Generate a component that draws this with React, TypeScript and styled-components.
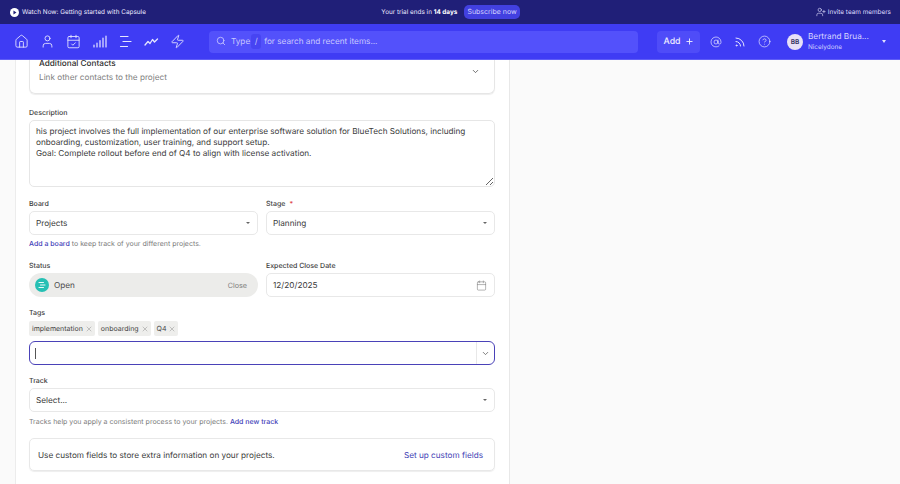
import React from "react";
import styled, { createGlobalStyle } from "styled-components";
import { Home, User, CalendarCheck, Zap, Search, Plus, AtSign, Rss, CircleHelp, UserPlus, ChevronDown, X, Calendar } from "lucide-react";

const Global = createGlobalStyle`
  html, body { margin: 0; height: 100%; background: #fafafa; }
  body { font-family: Inter, "Liberation Sans", sans-serif; color: #2b2b2b; overflow: hidden; text-rendering: geometricPrecision; }
  * { box-sizing: border-box; }
`;

const Page = styled.div`display: flex; flex-direction: column; height: 484px; width: 900px; overflow: hidden;`;

const TopBar = styled.div`
  height: 24px; background: #201f78; color: #fff; font-size: 6.4px; display: grid;
  grid-template-columns: 1fr auto 1fr; align-items: center; padding: 0 9px 0 10px; flex: none;
`;
const Watch = styled.div`display: flex; align-items: center; gap: 3px; color: #eceaff;`;
const PlayDisc = styled.svg`width: 9px; height: 9px; flex: none;`;
const Trial = styled.div`display: flex; align-items: center; gap: 7px; color: #eceaff; b { font-weight: 700; color: #fff; }`;
const Subscribe = styled.span`background: #4240e0; color: #d5d4ff; border-radius: 5px; padding: 2px 3px; line-height: 10px; font-size: 7px;`;
const Invite = styled.div`display: flex; align-items: center; gap: 2px; justify-content: flex-end; color: #dfdeff;`;

const Nav = styled.div`
  height: 36px; background: #3f3cf4; border-bottom: 1px solid #5f5df6; color: #e6e6ff; display: flex; align-items: center; flex: none; padding-left: 13px;
  position: relative; z-index: 1;
`;
const IconRow = styled.div`display: flex; gap: 10px; align-items: center; width: 196px; flex: none;`;
const NavIcon = styled.span`width: 16px; height: 16px; display: flex; align-items: center; justify-content: center; flex: none;`;
const SearchBox = styled.div`
  width: 429px; height: 22px; background: #5351fb; border-radius: 4px; display: flex; align-items: center; padding: 0 0 1px 7px; color: #c9c8ff; font-size: 8.2px; flex: none;
`;
const SearchGlyph = styled(Search)`margin-right: 5px;`;
const Key = styled.span`background: #4744f2; border-radius: 3px; width: 10px; height: 15px; display: flex; align-items: center; justify-content: center; margin: 0 3px 0 1px;`;
const AddBtn = styled.div`
  margin-left: 19px; width: 43px; height: 22px; background: #4f4cf8; border-radius: 4px; display: flex; align-items: center; justify-content: center; gap: 4px; color: #eeeeff; font-size: 8.8px; font-weight: 500; flex: none;
`;
const RightIcons = styled.div`display: flex; margin-left: 8px; gap: 8px; align-items: center;`;
const Avatar = styled.div`
  margin-left: 15px; width: 16px; height: 16px; border-radius: 50%; background: #e7e0f7; color: #33305f; font-size: 6.5px; font-weight: 600; display: flex; align-items: center; justify-content: center; flex: none;
`;
const UserInfo = styled.div`margin-left: 5px; width: 69px; display: flex; flex-direction: column; flex: none;`;
const UserName = styled.div`font-size: 8.2px; line-height: 11px; color: #d9d8ff; white-space: nowrap;`;
const Org = styled.div`font-size: 6.4px; line-height: 10px; color: #d0cfff;`;
const Caret = styled.span`margin-left: 5px; width: 0; height: 0; border-left: 2.5px solid transparent; border-right: 2.5px solid transparent; border-top: 3px solid #e0e0ff;`;

const Main = styled.div`flex: 1; overflow: hidden; padding-left: 15px;`;
const FormCard = styled.div`
  width: 495px; background: #fff; border-left: 1px solid #ececec; border-right: 1px solid #e8e8e8; padding: 0 14px 0 13px; height: 500px;
`;
const Contacts = styled.div`
  height: 34px; border: 1px solid #e6e6e6; border-top: none; border-radius: 0 0 6px 6px; box-shadow: 0 1px 1px #eee; display: flex; align-items: flex-start; justify-content: space-between; padding: 0 14px 0 9px; margin-bottom: 13px;
`;
const ContactsText = styled.div`display: flex; flex-direction: column; gap: 4px;`;
const ContactsTitle = styled.div`font-size: 8.2px; font-weight: 500; color: #2d2d2d; line-height: 7px;`;
const ContactsSub = styled.div`font-size: 8.2px; color: #808080; line-height: 12px;`;
const ContactsChevron = styled.span`display: flex; margin-top: 7px; color: #444;`;

const Label = styled.div`font-size: 7px; font-weight: 500; color: #3c3c3c; height: 13px; line-height: 11px; span { color: #d44; margin-left: 4px; }`;
const TagsLabel = styled(Label)`height: 14px; margin-top: 10px;`;
const Desc = styled.textarea`
  display: block; width: 466px; height: 67px; border: 1px solid #e6e6e6; border-radius: 5px; padding: 5px 6px; margin: 0 0 11px; font: 400 8.2px/11px Inter, sans-serif; text-rendering: geometricPrecision; color: #3a3a3a; outline: none; resize: vertical; overflow: hidden;
`;
const Two = styled.div`display: grid; grid-template-columns: 229px 229px; column-gap: 8px;`;
const StatusRow = styled(Two)`margin-top: 11px;`;
const Field = styled.div`display: flex; flex-direction: column;`;
const Control = styled.div`
  height: 24px; border: 1px solid #e8e8e8; border-radius: 5px; display: flex; align-items: center; justify-content: space-between; padding: 0 7px 0 6px; font-size: 8.2px; color: #3a3a3a; background: #fff;
`;
const SmallCaret = styled.span`width: 0; height: 0; border-left: 2px solid transparent; border-right: 2px solid transparent; border-top: 2.5px solid #666;`;
const Help = styled.div<{ $top?: number }>`font-size: 7px; line-height: 11px; color: #7b7b7b; margin-top: ${(p) => p.$top ?? 3}px; height: 11px; a { color: #413db8; text-decoration: none; font-weight: 500; }`;
const Status = styled.div`
  height: 24px; border-radius: 12px; background: #ececea; display: flex; align-items: center; padding: 0 11px 0 6px; font-size: 8.2px; color: #4a4a4a;
`;
const StatusIcon = styled.span`width: 14px; height: 14px; border-radius: 50%; background: #26c0b4; display: flex; align-items: center; justify-content: center; margin-right: 5px;`;
const Close = styled.span`margin-left: auto; font-size: 7.2px; color: #7c7c7c;`;
const Chips = styled.div`display: flex; gap: 3px; margin-bottom: 5px;`;
const Chip = styled.span`
  height: 15px; background: #eeeeec; border-radius: 2px; padding: 0 2px 0 3px; display: flex; align-items: center; gap: 2px; font-size: 7px; color: #444;
`;
const TagInput = styled.div`
  height: 24px; border: 1.5px solid #4a42b8; border-radius: 6px; display: flex; align-items: center; justify-content: space-between; padding-left: 5px; margin-bottom: 10px;
`;
const Cursor = styled.span`width: 1px; height: 11px; background: #555;`;
const TagArrow = styled.span`width: 18px; height: 100%; border-left: 1px solid #e8e8e8; display: flex; align-items: center; justify-content: center; color: #555;`;
const Custom = styled.div`
  height: 33px; border: 1px solid #e8e8e8; border-radius: 5px; box-shadow: 0 1px 1px #eee; display: flex; align-items: center; justify-content: space-between; padding: 0 11px 0 8px; font-size: 8.2px; color: #3a3a3a; margin-top: 11px;
  a { color: #433fb5; text-decoration: none; }
`;

const navIconProps = { size: 15, strokeWidth: 1.4 };

const Bars = () => (
  <svg width="15" height="15" viewBox="0 0 15 15" fill="none" stroke="currentColor" strokeWidth="1.2" strokeLinecap="round">
    <path d="M2 13v-2M5 13V9M8 13V6.500M11 13V4M14 13V2" />
  </svg>
);
const Lines = () => (
  <svg width="15" height="15" viewBox="0 0 15 15" fill="none" stroke="currentColor" strokeWidth="1.2" strokeLinecap="round">
    <path d="M2.500 2.500h7.500M5 7.500h8M2.500 12.500h7" />
  </svg>
);
const Wave = () => (
  <svg width="15" height="15" viewBox="0 0 15 15" fill="none" stroke="currentColor" strokeWidth="1.3" strokeLinecap="round" strokeLinejoin="round">
    <path d="M1 11l3-3.500 2 2 2.500-4 2 2.500 3-3" />
  </svg>
);

export default function App() {
  return (
    <Page>
      <Global />
      <TopBar>
        <Watch>
          <PlayDisc viewBox="0 0 10 10"><circle cx="5" cy="5" r="5" fill="#fff" /><path d="M3.800 2.700L7.200 5 3.800 7.300z" fill="#201f78" /></PlayDisc>
          Watch Now: Getting started with Capsule
        </Watch>
        <Trial>
          <span>Your trial ends in <b>14 days</b></span>
          <Subscribe>Subscribe now</Subscribe>
        </Trial>
        <Invite><UserPlus size={10} strokeWidth={1.5} />Invite team members</Invite>
      </TopBar>
      <Nav>
        <IconRow>
          <NavIcon><Home {...navIconProps} /></NavIcon>
          <NavIcon><User {...navIconProps} /></NavIcon>
          <NavIcon><CalendarCheck {...navIconProps} /></NavIcon>
          <NavIcon><Bars /></NavIcon>
          <NavIcon><Lines /></NavIcon>
          <NavIcon><Wave /></NavIcon>
          <NavIcon><Zap {...navIconProps} /></NavIcon>
        </IconRow>
        <SearchBox>
          <SearchGlyph size={10} strokeWidth={2} />
          Type<Key>/</Key>for search and recent items...
        </SearchBox>
        <AddBtn>Add <Plus size={9} strokeWidth={2.4} /></AddBtn>
        <RightIcons>
          <NavIcon><AtSign size={12} strokeWidth={1.4} /></NavIcon>
          <NavIcon><Rss size={12} strokeWidth={2} /></NavIcon>
          <NavIcon><CircleHelp size={13} strokeWidth={1.3} /></NavIcon>
        </RightIcons>
        <Avatar>BB</Avatar>
        <UserInfo>
          <UserName>Bertrand Brua...</UserName>
          <Org>Nicelydone</Org>
        </UserInfo>
        <Caret />
      </Nav>
      <Main>
        <FormCard>
          <Contacts>
            <ContactsText>
              <ContactsTitle>Additional Contacts</ContactsTitle>
              <ContactsSub>Link other contacts to the project</ContactsSub>
            </ContactsText>
            <ContactsChevron><ChevronDown size={9} strokeWidth={2} /></ContactsChevron>
          </Contacts>
          <Label>Description</Label>
          <Desc readOnly defaultValue={"his project involves the full implementation of our enterprise software solution for BlueTech Solutions, including onboarding, customization, user training, and support setup.\nGoal: Complete rollout before end of Q4 to align with license activation."} />
          <Two>
            <Field>
              <Label>Board</Label>
              <Control>Projects<SmallCaret /></Control>
              <Help><a>Add a board</a> to keep track of your different projects.</Help>
            </Field>
            <Field>
              <Label>Stage<span>*</span></Label>
              <Control>Planning<SmallCaret /></Control>
            </Field>
          </Two>
          <StatusRow>
            <Field>
              <Label>Status</Label>
              <Status>
                <StatusIcon>
                  <svg width="8" height="8" viewBox="0 0 8 8" stroke="#fff" strokeWidth="0.9" strokeLinecap="round"><path d="M1 1.500h4.500M2.500 4h4.500M1 6.500h4.500" /></svg>
                </StatusIcon>
                Open
                <Close>Close</Close>
              </Status>
            </Field>
            <Field>
              <Label>Expected Close Date</Label>
              <Control>12/20/2025<Calendar size={11} strokeWidth={1.2} color="#777" /></Control>
            </Field>
          </StatusRow>
          <TagsLabel>Tags</TagsLabel>
          <Chips>
            <Chip>implementation<X size={8} strokeWidth={1.2} color="#777" /></Chip>
            <Chip>onboarding<X size={8} strokeWidth={1.2} color="#777" /></Chip>
            <Chip>Q4<X size={8} strokeWidth={1.2} color="#777" /></Chip>
          </Chips>
          <TagInput>
            <Cursor />
            <TagArrow><ChevronDown size={9} strokeWidth={2} /></TagArrow>
          </TagInput>
          <Label>Track</Label>
          <Control>Select...<SmallCaret /></Control>
          <Help $top={4}>Tracks help you apply a consistent process to your projects. <a>Add new track</a></Help>
          <Custom>
            <span>Use custom fields to store extra information on your projects.</span>
            <a>Set up custom fields</a>
          </Custom>
        </FormCard>
      </Main>
    </Page>
  );
}
